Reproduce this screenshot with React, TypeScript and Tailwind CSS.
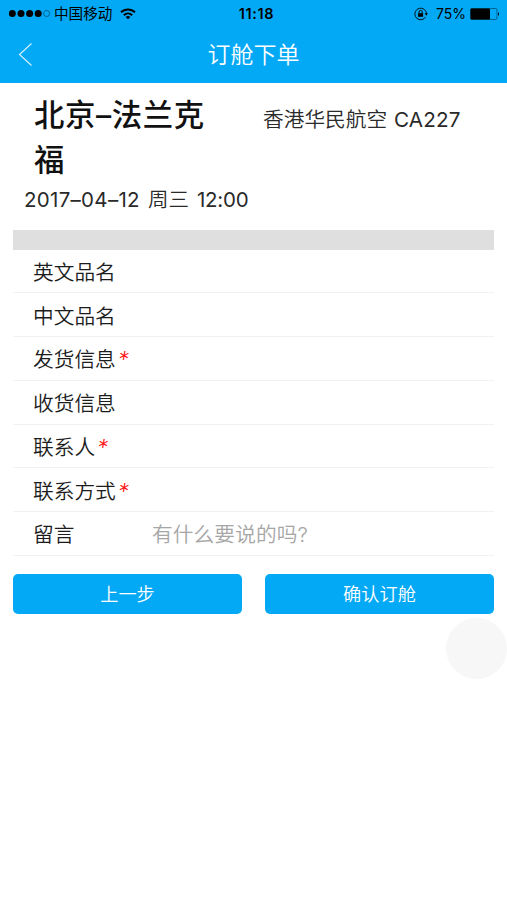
import React from "react";

type Field = { label: string; required?: boolean; placeholder?: string };

const fields: Field[] = [
  { label: "英文品名" },
  { label: "中文品名" },
  { label: "发货信息", required: true },
  { label: "收货信息" },
  { label: "联系人", required: true },
  { label: "联系方式", required: true },
  { label: "留言", placeholder: "有什么要说的吗?" },
];

function StatusBar() {
  return (
    <div className="flex h-[27px] items-center text-black">
      <div className="flex w-[220px] items-center pl-[9px]">
        <svg width="42" height="10" viewBox="0 0 42 10">
          {[3.3, 12, 20.6, 29.2].map((x) => (
            <circle key={x} cx={x} cy="4.5" r="3.5" />
          ))}
          <circle cx="37.6" cy="4.5" r="3" fill="none" stroke="black" strokeWidth=".6" opacity=".65" />
        </svg>
        <span className="ml-[3px] pt-[2px] text-[14.6px] leading-[25px]">中国移动</span>
        <svg className="ml-2" width="16" height="12" viewBox="0 0 16 12" fill="none" stroke="black" strokeWidth="2">
          <path d="M1 4.3C5 .4 11 .4 15 4.3" />
          <path d="M3.8 7.3C6.2 5 9.8 5 12.2 7.3" />
          <path d="M8 11.3 5.6 9Q8 7.2 10.4 9Z" fill="black" stroke="none" />
        </svg>
      </div>
      <span className="w-[73px] text-center text-[14.5px] font-semibold leading-[27px] tracking-[0.6px]">11:18</span>
      <div className="flex flex-1 items-center justify-end pr-[7px]">
        <svg width="14" height="14" viewBox="0 0 14 14" fill="none" stroke="black" strokeWidth=".9">
          <path d="M11.7 4.1A5.8 5.8 0 1 0 11.6 10M11.7 4.1A6 6 0 0 1 12.4 7" />
          <path d="m10.7 6.3 3.2 0-1.6 2.4Z" fill="black" stroke="none" />
          <rect x="4.1" y="6.2" width="5" height="3.6" fill="black" stroke="none" />
          <path d="M5 6.4V5a1.6 1.6 0 0 1 3.2 0v1.4" />
        </svg>
        <span className="ml-[8px] text-[14px] leading-[27px]">75%</span>
        <svg className="ml-[4px]" width="30" height="12" viewBox="0 0 30 12">
          <rect x=".5" y=".5" width="26.5" height="11" rx="1.5" fill="none" stroke="black" strokeWidth=".7" opacity=".6" />
          <rect x=".5" y=".5" width="19.5" height="11" rx="1" />
          <path d="M28 4q2 2 0 4Z" />
        </svg>
      </div>
    </div>
  );
}

function FieldRow({ label, required, placeholder }: Field) {
  return (
    <div className="flex h-[43.75px] items-center border-b border-[#f2f2f2] pl-[20px] pt-[4px] text-[20.7px] leading-[38px]">
      <span className="w-[119px] whitespace-nowrap font-[350] text-[#1c1c1c]">
        {label}
        {required && (
          <span className="ml-[2px] text-[22px] font-light italic leading-[20px] text-[#ff1010]">*</span>
        )}
      </span>
      {placeholder && <span className="font-[350] tracking-[0.1px] text-[#a6a6a6]">{placeholder}</span>}
    </div>
  );
}

export default function App() {
  return (
    <main className="relative h-[900px] w-[507px] overflow-hidden bg-white font-['Inter','Noto_Sans_CJK_SC',sans-serif]">
      <header className="h-[82.5px] bg-[#04a9f5]">
        <StatusBar />
        <nav className="grid h-[55px] grid-cols-[60px_1fr_60px] items-center">
          <svg className="ml-[18px]" width="15" height="26" viewBox="0 0 15 26" fill="none" stroke="white" strokeWidth="1.1" opacity=".85">
            <path d="M13.5 1.5 1.5 12.5l12 11" />
          </svg>
          <h1 className="text-center text-[23px] font-[350] leading-[50px] text-white">订舱下单</h1>
        </nav>
      </header>
      <section className="flex h-[102px] pl-[34px] pt-[10px]">
        <h2 className="w-[229px] pr-[50px] text-[30.4px] font-medium leading-[45px] tracking-[0.6px] text-[#111]">
          北京–法兰克福
        </h2>
        <p className="whitespace-nowrap pt-[9px] text-[20.7px] font-[350] leading-[36px] text-[#2a2a2a]">
          香港华民航空 <span className="ml-px font-normal tracking-[0.15px]">CA227</span>
        </p>
      </section>
      <p className="flex h-[45px] gap-[8px] pl-[24px] text-[20.5px] leading-[30px] text-[#2a2a2a]">
        <span className="tracking-[0.3px]">2017–04–12</span>
        <span className="font-[350]">周三</span>
        <span className="tracking-[-0.2px]">12:00</span>
      </p>
      <div className="mx-[13px] h-[20px] bg-[#dfdfdf]" />
      <section className="mx-[13px]">
        {fields.map((f) => (
          <FieldRow key={f.label} {...f} />
        ))}
      </section>
      <div className="mx-[13px] mt-[18px] grid grid-cols-2 gap-[23px] text-[18.2px] font-[350] leading-[40px] text-white">
        <button className="h-[40px] rounded-[5px] bg-[#04a9f5]">上一步</button>
        <button className="h-[40px] rounded-[5px] bg-[#04a9f5]">确认订舱</button>
      </div>
      <div className="absolute left-[446px] top-[618px] size-[61px] rounded-full bg-[#f7f7f7]" />
    </main>
  );
}
